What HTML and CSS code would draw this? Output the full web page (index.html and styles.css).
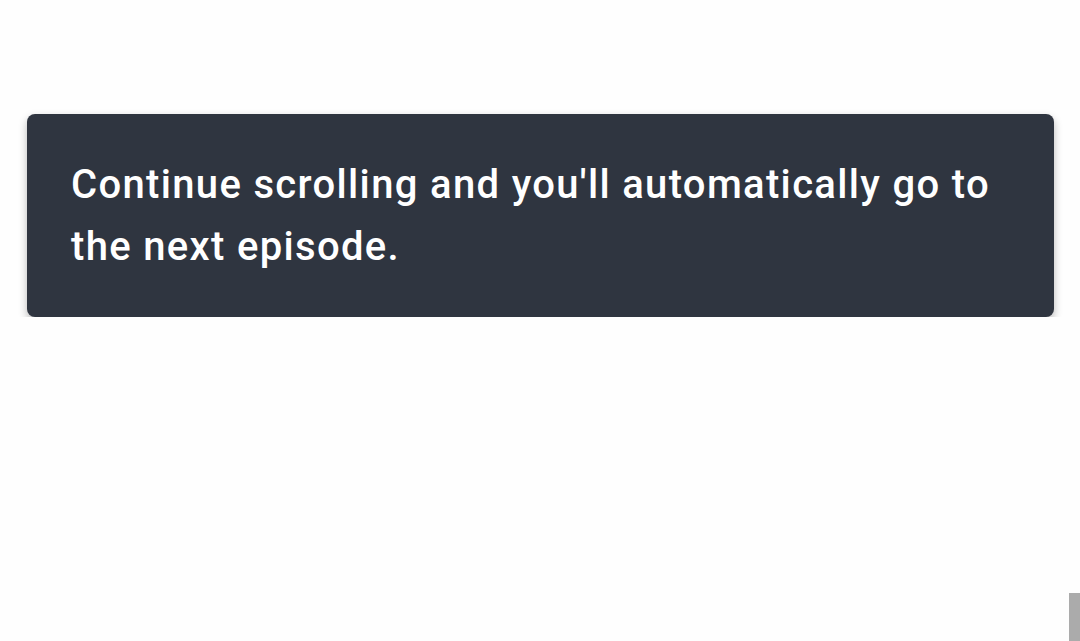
FILE: index.html
```html
<!DOCTYPE html>
<html lang="en">
<head>
  <meta charset="UTF-8">
  <title>Next episode</title>
  <link rel="stylesheet" href="styles.css">
</head>
<body>

  <div class="aviso">
    <p>Continue scrolling and you'll automatically go to the next episode.</p>
  </div>

  <div class="scroll-thumb"></div>

</body>
</html>
```

FILE: styles.css
```css
body {
  margin: 0;
  background-color: #fefefe;
  font-family: Roboto, "Noto Sans", sans-serif;
  padding: 114px 26px 0 27px;
}
.aviso {
  background-color: #2f3540;
  border-radius: 8px;
  padding: 40px 44px 39px 44px;
  box-shadow: 0 4px 8px rgba(0,0,0,0.28);
}
.aviso p {
  margin: 0;
  color: #fff;
  font-size: 40px;
  font-weight: 500;
  line-height: 62px;
  letter-spacing: 1.33px;
}
.scroll-thumb {
  position: fixed;
  right: 0;
  bottom: 0;
  width: 11px;
  height: 48px;
  background-color: #ababab;
}
```
